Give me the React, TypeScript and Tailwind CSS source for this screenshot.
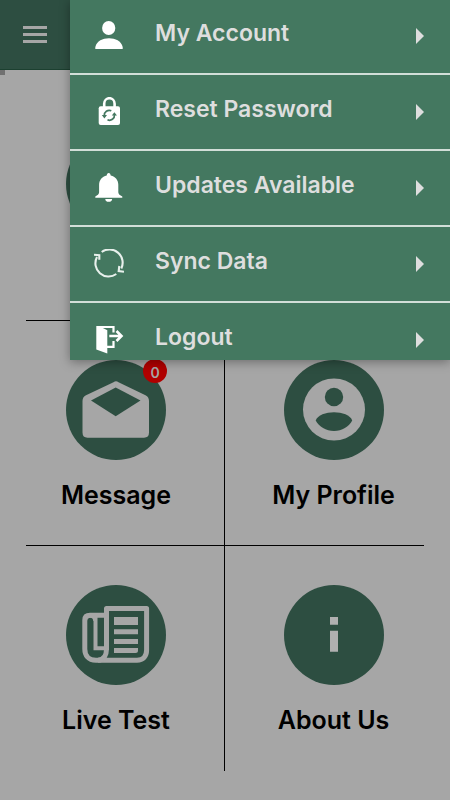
import type { ReactNode } from "react";

function MenuIcon({ children }: { children: ReactNode }) {
  return (
    <svg viewBox="0 0 30 30" className="size-[30px] shrink-0" fill="#fff" aria-hidden="true">
      {children}
    </svg>
  );
}

const menuItems: { label: string; icon: ReactNode }[] = [
  {
    label: "My Account",
    icon: (
      <>
        <ellipse cx="14.7" cy="7" rx="6.6" ry="7" />
        <path d="M1.3 28V26C3 20 8.500 17.300 15 17.300S27 20 28.700 26V28Z" />
      </>
    ),
  },
  {
    label: "Reset Password",
    icon: (
      <>
        <rect x="4.700" y="9.300" width="21.300" height="18.700" rx="2" />
        <path d="M10.200 11V6.700a5.200 5.500 0 0 1 10.400 0V11" fill="none" stroke="#fff" strokeWidth="2.600" />
        <g fill="none" stroke="#447860" strokeWidth="1.700">
          <path d="M10.300 18.800a5 5 0 0 1 7-5" />
          <path d="M20.500 17.800a5 5 0 0 1-7 5" />
        </g>
        <path d="M7.800 18.100h5.200l-2.600 3.300zM17.800 18.500h5.200l-2.600-3.300z" fill="#447860" />
      </>
    ),
  },
  {
    label: "Updates Available",
    icon: (
      <>
        <path d="M14.700 0C16 0 16.400 1.300 16.700 2.500C21.500 3.500 24.300 7.300 24.300 11.800V19.300C24.300 21.300 26 22.300 28.300 23.500V24.700H1.300V23.500C3.500 22.300 5.100 21.300 5.100 19.300V11.800C5.100 7.300 8 3.500 12.700 2.500C13 1.300 13.400 0 14.700 0Z" />
        <path d="M11.300 25.900h6.800a3.400 2.800 0 0 1-6.800 0z" />
      </>
    ),
  },
  {
    label: "Sync Data",
    icon: (
      <g fill="none" stroke="#e8f0ec" strokeWidth="2.100">
        <path d="M7.700 3A13.200 13.200 0 0 1 27.300 19.500" />
        <path d="M22.300 25A13.200 13.200 0 0 1 3 8" />
        <path d="M0 5.700L5.300 6.200L5.300 10.800M30 22.700L24.700 22L25.300 17" />
      </g>
    ),
  },
  {
    label: "Logout",
    icon: (
      <>
        <path d="M2.300 1H5L13.300 5.300V28.600L2.300 24.600Z" />
        <path d="M4 2H19.500V7.500M19.500 16V21.800H13" fill="none" stroke="#fff" strokeWidth="2.200" />
        <path d="M15.300 11H27M22.500 6L27.500 11L22.500 16" fill="none" stroke="#fff" strokeWidth="2.600" />
      </>
    ),
  },
];

function Tile({ label, badge, side, children }: { label?: string; badge?: string; side: "left" | "right"; children?: ReactNode }) {
  return (
    <button
      type="button"
      className={
        side === "left"
          ? "flex h-full w-full flex-col items-center border-r border-black pt-[39px] pr-[18px]"
          : "flex h-full w-full flex-col items-center pt-[39px] pl-[18px]"
      }
    >
      <span className="relative block size-[100px] rounded-full bg-[#2d4e41]">
        <svg viewBox="0 0 100 100" className="size-full" fill="#a6a6a6" aria-hidden="true">
          {children}
        </svg>
        {badge && (
          <span className="absolute -top-px -right-px flex size-6 items-center justify-center rounded-full bg-[#b00000] pt-1 text-sm leading-5 font-semibold text-[#a6a6a6]">
            {badge}
          </span>
        )}
      </span>
      {label && <span className="mt-[19px] text-[25px] leading-8 font-semibold text-black">{label}</span>}
    </button>
  );
}

export default function App() {
  return (
    <div className="relative min-h-screen bg-[#a6a6a6] font-['Inter','Open_Sans',sans-serif]">
      <header className="flex h-[70px] items-center border-b border-[#1c4030] bg-[#2d4e41] px-[23px]">
        <button type="button" aria-label="Menu" className="flex flex-col gap-1">
          <span className="h-[3px] w-6 bg-[#a6a6a6]" />
          <span className="h-[3px] w-6 bg-[#a6a6a6]" />
          <span className="h-[3px] w-6 bg-[#a6a6a6]" />
        </button>
      </header>
      <div className="size-[5px] bg-[#707070]" />

      <main className="mx-[26px] mt-5">
        <div className="grid h-[226px] grid-cols-2 border-b border-black">
          <Tile side="left" />
        </div>
        <div className="grid h-[225px] grid-cols-2 border-b border-black">
          <Tile label="Message" badge="0" side="left">
            <path d="M47.500 22.200Q50 20.500 52.500 22.200L79.500 35.200Q83 37 83 41V72.500Q83 77.700 78 77.700H21.500Q16.500 77.700 16.500 72.500V41Q16.500 37 20 35.200Z" />
            <path d="M49.700 27.500L74.500 40.500L49.700 56.300L25 40.500Z" fill="#2d4e41" />
          </Tile>
          <Tile label="My Profile" side="right">
            <circle cx="50" cy="49.500" r="31" />
            <g fill="#2d4e41">
              <circle cx="50" cy="37" r="9.200" />
              <path d="M31.700 60.500C33.500 55 42 52.200 50 52.200S66.500 55 68.200 60.500C65 66.500 58 71 50 71S35 66.500 31.700 60.500Z" />
            </g>
          </Tile>
        </div>
        <div className="grid h-[225px] grid-cols-2">
          <Tile label="Live Test" side="left">
            <g fill="none" stroke="#a6a6a6" strokeWidth="5">
              <path d="M40.500 65V23.400H80.600V65C80.600 71.500 77 75.200 71 75.200H30C22 75.200 18.800 70 18.800 64V35C18.800 31.500 20.500 30.200 24 30.200H40.500" strokeLinejoin="round" />
              <path d="M40.500 64C40.500 70 38 75 32 75.200" />
            </g>
            <path d="M29.500 32V63.200H40" fill="none" stroke="#a6a6a6" strokeWidth="4" />
            <path d="M21 31h8.500v5h-2.200c0-4.500-6-4.500-6 0z" />
            <path d="M48 32h24v8H48zM48 44.300h24v5H48zM48 54h24v5H48zM48 63h24v2.500q0 2.500-2.500 2.500H48z" />
          </Tile>
          <Tile label="About Us" side="right">
            <path d="M46 32h8v7.700h-8zM46 45.700h8v21h-8z" fill="#b0b0b0" />
          </Tile>
        </div>
      </main>

      <nav className="absolute top-0 right-0 left-[70px] max-h-[45vh] overflow-hidden bg-[#447860] shadow-[0_2px_10px_rgba(0,0,0,0.35)]">
        <ul className="-mt-px">
          {menuItems.map((item) => (
            <li key={item.label} className="h-[76px] border-b-2 border-[#d2ded8]">
              <button type="button" className="flex h-full w-full items-center pr-[26px] pl-6 text-left">
                <MenuIcon>{item.icon}</MenuIcon>
                <span className="ml-[31px] flex-1 pb-1.5 text-[23px] leading-8 font-semibold text-[#dedede]">{item.label}</span>
                <svg viewBox="0 0 8 16" className="h-4 w-2" fill="#dedede" aria-hidden="true">
                  <path d="M0 0L8 8L0 16Z" />
                </svg>
              </button>
            </li>
          ))}
        </ul>
      </nav>
    </div>
  );
}
